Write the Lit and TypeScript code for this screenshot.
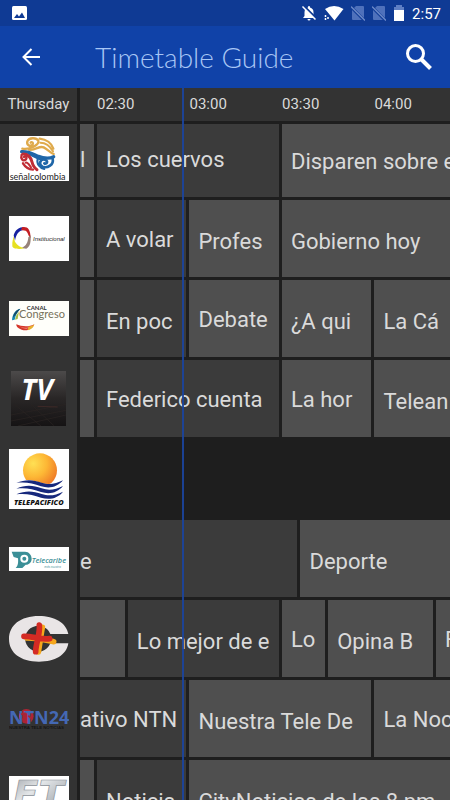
import { LitElement, html, css, TemplateResult } from "lit";
import { customElement, property } from "lit/decorators.js";
import { classMap } from "lit/directives/class-map.js";
import { styleMap } from "lit/directives/style-map.js";

interface Programme {
  title: string;
  minutes: number;
  live?: boolean;
  tall?: boolean; // the full title has a descender or an accent
}

interface Channel {
  name: string;
  logo: TemplateResult;
  programmes: Programme[];
}

// Minutes that fit across the timeline, and how far the window starts before 02:30.
const SPAN = 120;
const LEAD = 5.5;
const NOW = 33;
const share = (minutes: number) => `${(minutes / SPAN) * 100}%`;

const senal = html`<svg width="60" height="45" viewBox="0 0 180 135" role="img" aria-label="Señal Colombia">
  <rect width="180" height="135" fill="#fff" />
  <g fill="none" stroke-linecap="round">
    <g stroke="#dfaa4c">
      <path d="M40 38C62 42 92 26 88 14C82 4 60 4 55 16C52 28 64 33 71 26C74 20 68 16 65 20" stroke-width="7" />
      <path d="M92 8C112 10 128 22 133 38" stroke-width="7" />
      <path d="M94 20C110 20 124 32 132 46" stroke-width="6" />
      <path d="M60 41C80 44 90 28 104 34C116 40 124 50 134 54" stroke-width="7" />
    </g>
    <g stroke="#1f66a8">
      <path d="M38 47C60 46 72 54 86 60C104 67 124 67 134 62" stroke-width="10" />
      <path d="M62 54C78 62 90 70 100 70" stroke-width="8" />
      <path d="M131 68C135 86 116 98 100 92C86 82 96 68 108 71C120 76 112 86 106 82" stroke-width="8" />
      <path d="M86 68C82 84 92 96 106 99" stroke-width="6" />
    </g>
    <g stroke="#c02c35">
      <path d="M38 56C34 68 42 78 50 71C56 64 49 58 45 63" stroke-width="7" />
      <path d="M42 54C60 54 66 66 69 78C72 90 76 96 84 101" stroke-width="9" />
      <path d="M42 82C48 92 60 100 72 101" stroke-width="7" />
      <path d="M50 80C56 78 60 86 66 94" stroke-width="6" />
    </g>
  </g>
  <text x="2" y="131" font-family="Lato, sans-serif" font-size="27" fill="#222">señalcolombia</text>
</svg>`;

const institucional = html`<svg width="60" height="45" viewBox="0 0 180 135" role="img" aria-label="Institucional">
  <rect width="180" height="135" fill="#fff" />
  <path d="M14 58C18 42 30 33 46 33L42 42C30 44 22 54 18 74Z" fill="#1822a0" />
  <path d="M40 33C56 31 64 38 65 66C58 62 58 50 50 44L36 42Z" fill="#c41f24" />
  <path d="M65 58C66 78 64 92 52 98L38 96C52 90 57 78 58 64Z" fill="#97827a" />
  <path d="M15 60C14 76 22 90 46 97C28 101 10 98 10 90C9 78 12 68 15 60Z" fill="#e6e021" />
  <text x="72" y="75" font-family="Liberation Sans, sans-serif" font-size="18" font-style="italic" fill="#222">Institucional</text>
</svg>`;

const congreso = html`<svg width="60" height="35" viewBox="0 0 180 105" role="img" aria-label="Canal Congreso">
  <rect width="180" height="105" fill="#fffffa" />
  <path d="M9 58C10 38 20 26 34 23C25 33 19 43 17 56Z" fill="#1689b5" />
  <path d="M12 50C14 36 22 26 34 23L24 36Z" fill="#184a66" />
  <path d="M18 56C20 46 24 38 30 32L26 54Z" fill="#a5bd45" />
  <path d="M22 70C36 76 58 80 76 70C70 84 54 92 38 86C26 82 21 76 22 70Z" fill="#d5372a" />
  <path d="M58 77C66 76 72 74 76 70C74 80 66 86 56 88Z" fill="#e8b22e" />
  <path d="M32 76Q46 84 60 78L54 83Q40 84 32 76Z" fill="#f3917c" />
  <text x="53" y="27" font-family="Lato, sans-serif" font-size="18" font-weight="700" fill="#333">CANAL</text>
  <text x="30" y="51" font-family="Lato, sans-serif" font-size="33" fill="#77725b">Congreso</text>
</svg>`;

const tv = html`<svg width="55" height="55" viewBox="0 0 165 165" role="img" aria-label="TV">
  <defs>
    <linearGradient id="tv" x1="0" y1="0" x2="0" y2="1">
      <stop offset="0" stop-color="#4c4a4a" />
      <stop offset=".5" stop-color="#292626" />
      <stop offset="1" stop-color="#151314" />
    </linearGradient>
  </defs>
  <rect width="165" height="165" fill="url(#tv)" />
  <path d="M0 132L165 100M0 150L165 118M20 165L165 132M10 100L90 165M60 100L130 165" stroke="#2a2423" stroke-width="2" />
  <path d="M80 106L140 108" stroke="#4a2e2a" stroke-width="2" />
  <text x="31" y="87" font-family="Open Sans, sans-serif" font-size="84" font-style="italic" font-weight="700" fill="#fff">TV</text>
</svg>`;

const telepacifico = html`<svg width="60" height="60" viewBox="0 0 180 180" role="img" aria-label="Telepacífico">
  <defs>
    <radialGradient id="sun" cx=".3" cy=".3" r=".8">
      <stop offset="0" stop-color="#ffe054" />
      <stop offset=".5" stop-color="#fdb735" />
      <stop offset="1" stop-color="#ee7726" />
    </radialGradient>
  </defs>
  <rect width="180" height="180" fill="#fff" />
  <circle cx="93" cy="64" r="51" fill="url(#sun)" />
  <path d="M22 98C54 88 76 94 98 102C122 110 140 102 162 92L162 150L22 150Z" fill="#fff" />
  <g fill="#16287c">
    <path d="M22 102C50 90 72 92 98 101C122 109 140 104 162 94C146 114 122 120 96 112C72 104 50 98 22 102Z" />
    <path d="M22 119C50 107 72 109 98 118C122 126 140 121 162 111C146 131 122 137 96 129C72 121 50 115 22 119Z" />
    <path d="M22 136C50 124 72 126 98 135C122 143 140 138 162 128C146 148 122 154 96 146C72 138 50 132 22 136Z" />
  </g>
  <text x="15" y="169" font-family="Open Sans, sans-serif" font-size="22" font-style="italic" font-weight="800" fill="#111">TELEPACIFICO</text>
</svg>`;

const telecaribe = html`<svg width="60" height="24" viewBox="0 0 180 72" role="img" aria-label="Telecaribe">
  <rect width="180" height="72" fill="#fff" />
  <path d="M8 14H48C60 14 68 24 68 35C68 46 59 54 50 53L40 63H20C28 56 28 44 27 34L14 30Z" fill="#3b8f97" />
  <circle cx="46" cy="35" r="12" fill="#fff" />
  <circle cx="46" cy="35" r="6" fill="#3b8f97" />
  <text x="68" y="48" font-family="Open Sans, sans-serif" font-size="22" font-style="italic" font-weight="600" fill="#3b8f97">Telecaribe</text>
  <text x="106" y="63" font-family="Open Sans, sans-serif" font-size="9" font-style="italic" fill="#3b8f97">más nuestro</text>
</svg>`;

const canalC = html`<svg width="60" height="46" viewBox="0 0 180 138" role="img" aria-label="Canal Capital">
  <path fill-rule="evenodd" fill="#e9e5e6" d="M178 54C172 20 136 0 90 0C34 0 0 28 0 69C0 110 34 137 90 137C138 137 172 118 178 82H124A39 39 0 1 1 124 54Z" />
  <g stroke-linecap="round" stroke-linejoin="round" stroke-width="17" fill="none">
    <path d="M100 34C96 56 92 84 88 108M54 66C82 66 110 72 134 77" stroke="#f5a71c" />
    <path d="M91 27C94 54 80 84 80 107M45 61C70 60 96 72 122 68" stroke="#d42b24" />
  </g>
</svg>`;

const ntn = html`<svg width="60" height="24" viewBox="0 0 180 72" role="img" aria-label="NTN24">
  <circle cx="52" cy="28" r="22" fill="#ad2434" />
  <text x="0" y="51" font-family="Open Sans, sans-serif" font-weight="700" font-size="54" fill="#4468b4">NTN24</text>
  <path d="M36 22L50 18M58 26L66 34M40 34L46 44" stroke="#ad2434" stroke-width="5" />
  <text x="0" y="67" font-family="Liberation Sans, sans-serif" font-weight="700" font-size="13" fill="#131313">NUESTRA TELE NOTICIAS</text>
</svg>`;

const cityTv = html`<svg width="60" height="45" viewBox="0 0 180 135" role="img" aria-label="FT">
  <defs>
    <linearGradient id="steel" x1="0" y1="0" x2="1" y2="1">
      <stop offset="0" stop-color="#9a9fa5" />
      <stop offset=".4" stop-color="#e3e6e8" />
      <stop offset="1" stop-color="#8a9097" />
    </linearGradient>
  </defs>
  <rect width="180" height="135" fill="#fff" />
  <text x="12" y="92" font-family="DejaVu Sans, sans-serif" font-size="112" font-style="italic" font-weight="700" fill="url(#steel)" stroke="#8a9097" stroke-width="2">FT</text>
</svg>`;

const CHANNELS: Channel[] = [
  {
    name: "senal", logo: senal,
    programmes: [
      { title: "l", minutes: LEAD },
      { title: "Los cuervos", minutes: 60, live: true },
      { title: "Disparen sobre el", minutes: 90, tall: true },
    ],
  },
  {
    name: "institucional", logo: institucional,
    programmes: [
      { title: "", minutes: LEAD },
      { title: "A volar", minutes: 30, live: true },
      { title: "Profes", minutes: 30, tall: true },
      { title: "Gobierno hoy", minutes: 60, tall: true },
    ],
  },
  {
    name: "congreso", logo: congreso,
    programmes: [
      { title: "", minutes: LEAD },
      { title: "En poc", minutes: 30, live: true, tall: true },
      { title: "Debate", minutes: 30 },
      { title: "¿A qui", minutes: 30, tall: true },
      { title: "La Cá", minutes: 30, tall: true },
    ],
  },
  {
    name: "tv", logo: tv,
    programmes: [
      { title: "", minutes: LEAD },
      { title: "Federico cuenta", minutes: 60, live: true },
      { title: "La hor", minutes: 30 },
      { title: "Telean", minutes: 30, tall: true },
    ],
  },
  { name: "telepacifico", logo: telepacifico, programmes: [] },
  {
    name: "telecaribe", logo: telecaribe,
    programmes: [
      { title: "e", minutes: 71.5, live: true, tall: true },
      { title: "Deporte", minutes: 60, tall: true },
    ],
  },
  {
    name: "canal-c", logo: canalC,
    programmes: [
      { title: "", minutes: 15.5 },
      { title: "Lo mejor de e", minutes: 50, live: true, tall: true },
      { title: "Lo", minutes: 15 },
      { title: "Opina B", minutes: 35, tall: true },
      { title: "F", minutes: 30 },
    ],
  },
  {
    name: "ntn24", logo: ntn,
    programmes: [
      { title: "ativo NTN", minutes: 35.5, live: true },
      { title: "Nuestra Tele De", minutes: 60, tall: true },
      { title: "La Noc", minutes: 30 },
    ],
  },
  {
    name: "city", logo: cityTv,
    programmes: [
      { title: "", minutes: LEAD },
      { title: "Noticia", minutes: 30, live: true, tall: true },
      { title: "CityNoticias de las 8 pm", minutes: 90, tall: true },
    ],
  },
];

const noSim = html`<svg width="14" height="16" viewBox="0 0 14 16" aria-hidden="true">
  <path d="M5 1H12Q13 1 13 2V15H2Q1 15 1 14V5Z" fill="#4f71bb" />
  <path d="M0 2L14 16" stroke="#0f3b96" stroke-width="3" />
  <path d="M0 1.5L14 15.5" stroke="#6f8bc9" stroke-width="1.3" />
</svg>`;

@customElement("status-bar")
export class StatusBar extends LitElement {
  static styles = css`
    :host {
      display: flex;
      align-items: center;
      gap: 7px;
      height: 26px;
      padding: 0 9px 0 12px;
      background: #0f3a94;
      color: #fff;
      font: 15px/26px Roboto, sans-serif;
    }
    .spacer { flex: 1; }
    .clock { padding-top: 2px; }
    svg { display: block; }
  `;

  render() {
    return html`
      <svg width="15" height="14" viewBox="0 0 15 14" aria-hidden="true">
        <rect width="15" height="14" rx="1.5" fill="#fff" />
        <path d="M2 12L5 8L7 10.5L10 6.5L13 12Z" fill="#0f3a94" />
      </svg>
      <span class="spacer"></span>
      <svg width="16" height="16" viewBox="0 0 16 16" aria-hidden="true">
        <path d="M8 1Q9 1 9 2V2.6Q12.5 3.5 12.5 7.5V11L14 13H2L3.5 11V7.5Q3.5 3.5 7 2.6V2Q7 1 8 1ZM6.5 14H9.5Q9.5 15.5 8 15.5T6.5 14Z" fill="#fff" />
        <path d="M2 0L16 14" stroke="#0f3a94" stroke-width="2" />
        <path d="M1.5 1.5L14.5 14.5" stroke="#fff" stroke-width="1.5" />
      </svg>
      <svg width="20" height="16" viewBox="0 0 20 16" aria-hidden="true">
        <path d="M1 4Q10 -2 19.5 4L10.5 15.5Z" fill="#fff" />
        <path d="M1.5 10V12M1.5 13V15M4 12V14" stroke="#fff" stroke-width="1.5" />
      </svg>
      ${noSim}${noSim}
      <svg width="12" height="16" viewBox="0 0 12 16" aria-hidden="true">
        <path d="M3 0H9V2H11V6H1V2H3Z" fill="#5f7fc4" />
        <rect x="1" y="5" width="10" height="11" fill="#fff" />
      </svg>
      <span class="clock">2:57</span>
    `;
  }
}

@customElement("app-bar")
export class AppBar extends LitElement {
  @property() heading = "";

  static styles = css`
    :host {
      display: flex;
      align-items: center;
      height: 62px;
      padding: 0 12px;
      background: #1042a8;
    }
    .icon {
      display: grid;
      place-items: center;
      width: 38px;
      height: 38px;
      padding: 0;
      border: 0;
      background: none;
      color: #fff;
    }
    .heading {
      flex: 1;
      margin: 0 0 0 45px;
      color: #a8c6f5;
      font: 300 28px/36px Lato, sans-serif;
    }
  `;

  render() {
    return html`
      <button class="icon" aria-label="Back">
        <svg width="20" height="20" viewBox="0 0 20 20" fill="none" stroke="currentColor" stroke-width="2">
          <path d="M19 10H2M10.5 2L2.5 10L10.5 18" />
        </svg>
      </button>
      <h1 class="heading">${this.heading}</h1>
      <button class="icon" aria-label="Search">
        <svg width="28" height="28" viewBox="0 0 28 28" fill="none" stroke="currentColor" stroke-width="3">
          <circle cx="10.5" cy="10.5" r="8" />
          <path d="M16.5 16.5L25.5 25.5" stroke-width="4" />
        </svg>
      </button>
    `;
  }
}

@customElement("app-root")
export class AppRoot extends LitElement {
  static styles = css`
    :host {
      display: flex;
      flex-direction: column;
      height: 100vh;
      overflow: hidden;
      background: #1e1e1e;
      color: #dadada;
      font-family: Roboto, sans-serif;
    }
    .guide {
      position: relative;
      flex: 1;
      min-height: 0;
      overflow: hidden;
    }
    .head,
    .row {
      display: grid;
      grid-template-columns: 77px minmax(0, 1fr);
      column-gap: 3px;
    }
    .head {
      position: relative;
      z-index: 1;
      border-bottom: 3px solid #1e1e1e;
      background: #1e1e1e;
      font-size: 15px;
      line-height: 33px;
    }
    .day {
      background: #333;
      text-align: center;
    }
    .times {
      display: flex;
      overflow: hidden;
      background: #333;
    }
    .lead,
    .time {
      flex: none;
    }
    .rows {
      margin-top: -4px;
    }
    .row {
      height: 80px;
    }
    .logo {
      display: grid;
      place-items: center;
      height: 80px;
      padding-bottom: 3px;
      box-sizing: border-box;
      background: #333;
    }
    .logo svg { display: block; }
    .programmes {
      display: flex;
      height: 77px;
      margin: 0;
      padding: 0;
      overflow: hidden;
      list-style: none;
    }
    .programme {
      display: flex;
      flex: none;
      align-items: center;
      box-sizing: border-box;
      padding: 2px 0 0 9px;
      overflow: hidden;
      border-right: 3px solid #1e1e1e;
      background: #4f4f4f;
      font-size: 22px;
      line-height: 26px;
      white-space: nowrap;
    }
    .programme:first-child { padding-left: 0; }
    .live { background: #3b3b3b; }
    .tall { padding-top: 6px; }
    .overlay {
      position: absolute;
      z-index: 2;
      inset: 0 0 0 80px;
      pointer-events: none;
    }
    .now {
      width: 2px;
      height: 100%;
      background: #1b45a0;
      opacity: 0.9;
    }
  `;

  private programme(p: Programme) {
    return html`<li
      class=${classMap({ programme: true, live: !!p.live, tall: !!p.tall })}
      style=${styleMap({ width: share(p.minutes) })}
    >${p.title}</li>`;
  }

  render() {
    return html`
      <status-bar></status-bar>
      <app-bar heading="Timetable Guide"></app-bar>
      <main class="guide">
        <div class="head">
          <div class="day">Thursday</div>
          <div class="times">
            <span class="lead" style=${styleMap({ width: share(LEAD) })}></span>
            ${["02:30", "03:00", "03:30", "04:00"].map(
              (t) => html`<time class="time" style=${styleMap({ width: share(30) })}>${t}</time>`
            )}
          </div>
        </div>
        <div class="rows">
          ${CHANNELS.map(
            (c) => html`<section class="row">
              <div class="logo">${c.logo}</div>
              <ul class="programmes">${c.programmes.map((p) => this.programme(p))}</ul>
            </section>`
          )}
        </div>
        <div class="overlay">
          <div class="now" style=${styleMap({ marginLeft: share(NOW) })}></div>
        </div>
      </main>
    `;
  }
}
